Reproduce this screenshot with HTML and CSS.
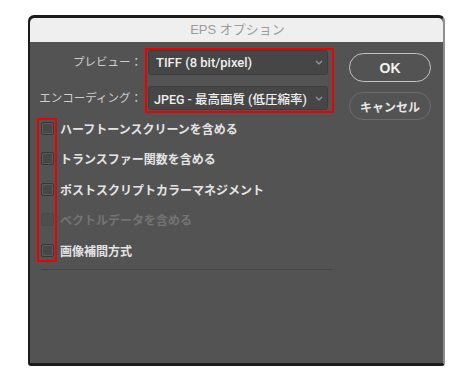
FILE: index.html
```html
<!DOCTYPE html>
<html lang="ja">
<head>
<meta charset="UTF-8">
<meta name="viewport" content="width=device-width, initial-scale=1.0">
<title>EPS オプション</title>
<link rel="stylesheet" href="styles.css">
</head>
<body>
<div class="page">
  <div class="window">
    <div class="titlebar">EPS オプション</div>

    <div class="content">
      <!-- プレビュー / エンコーディング -->
      <div class="form">
        <div class="labels">
          <span>プレビュー：</span>
          <span>エンコーディング：</span>
        </div>
        <div class="mark-box">
          <div class="select select-first">
            <span>TIFF (8 bit/pixel)</span>
            <svg class="chevron" width="8" height="5" viewBox="0 0 8 5"><path d="M1 1l3 3 3-3" fill="none" stroke="#9a9a9a" stroke-width="1.2"/></svg>
          </div>
          <div class="select select-second">
            <span>JPEG - 最高画質 (低圧縮率)</span>
            <svg class="chevron" width="8" height="5" viewBox="0 0 8 5"><path d="M1 1l3 3 3-3" fill="none" stroke="#9a9a9a" stroke-width="1.2"/></svg>
          </div>
        </div>
      </div>

      <div class="buttons">
        <button class="btn btn-ok">OK</button>
        <button class="btn btn-cancel">キャンセル</button>
      </div>

      <!-- チェックボックス -->
      <div class="options">
        <div class="mark-column"></div>
        <label class="option"><span class="check"></span>ハーフトーンスクリーンを含める</label>
        <label class="option"><span class="check"></span>トランスファー関数を含める</label>
        <label class="option"><span class="check"></span>ポストスクリプトカラーマネジメント</label>
        <label class="option disabled"><span class="check"></span>ベクトルデータを含める</label>
        <label class="option"><span class="check"></span>画像補間方式</label>
        <div class="separator"></div>
      </div>
    </div>
  </div>
</div>
</body>
</html>
```

FILE: styles.css
```css
/* Page */
body {
  margin: 0;
  background-color: #fff;
  font-family: "Liberation Sans", "Noto Sans CJK JP", sans-serif;
}

.page {
  padding: 15px 0 0 28px;
}

/* Dialog window */
.window {
  width: 417px;
  height: 351px;
  box-sizing: border-box;
  border: 2px solid #1d1a1a;
  border-top-width: 3px;
  border-bottom-width: 3px;
  border-right-color: #8e8e8e;
  border-radius: 6px 6px 3px 3px;
  background-color: #535353;
  display: flex;
  flex-direction: column;
}

.titlebar {
  height: 24px;
  line-height: 24px;
  background-color: #efefef;
  border-radius: 5px 5px 0 0;
  text-align: center;
  color: #9c9c9c;
  font-size: 13px;
  padding-left: 2px;
}

.content {
  display: grid;
  grid-template-columns: 307px 82px;
  column-gap: 12px;
  padding-top: 6px;
  align-items: start;
}

/* Form with selects */
.form {
  display: flex;
}

.labels {
  width: 115px;
  box-sizing: border-box;
  padding: 2px 3px 0 0;
  display: flex;
  flex-direction: column;
  gap: 11px;
  text-align: right;
  color: #cfcfcf;
  font-size: 11.5px;
}

.labels span {
  height: 25px;
  line-height: 25px;
}

.mark-box {
  width: 189px;
  box-sizing: border-box;
  border: 2px solid #ee0000;
  padding: 0 4px 1px 1px;
  display: flex;
  flex-direction: column;
  gap: 11px;
}

.select {
  height: 25px;
  box-sizing: border-box;
  background-color: #464646;
  border: 1px solid #3d3d3d;
  border-radius: 3px;
  display: flex;
  align-items: center;
  justify-content: space-between;
  padding: 0 4px 0 7px;
  color: #efefef;
  font-family: "Roboto", "Noto Sans CJK JP", sans-serif;
  font-size: 13px;
  font-weight: 500;
  white-space: nowrap;
}

.select-second {
  height: 24px;
  padding-left: 5px;
  font-size: 12.5px;
}

.chevron {
  flex: none;
}

/* Buttons */
.buttons {
  grid-column: 2;
  grid-row: 1 / span 2;
  margin-top: 5px;
  display: flex;
  flex-direction: column;
  gap: 10px;
}

.btn {
  height: 29px;
  background-color: transparent;
  border: 1px solid #c2c2c2;
  border-radius: 15px;
  color: #f2f2f2;
  font-family: "Liberation Sans", "Noto Sans CJK JP", sans-serif;
  font-size: 14px;
  font-weight: 700;
  padding: 0;
}

.btn-cancel {
  height: 28px;
  border-color: #6c6c6c;
  font-size: 12px;
  color: #e6e6e6;
}

/* Checkbox list */
.options {
  grid-column: 1;
  position: relative;
  padding-left: 11px;
}

.option {
  height: 30.5px;
  display: flex;
  align-items: center;
  gap: 6px;
  color: #e4e4e4;
  font-size: 12px;
  font-weight: 700;
}

.check {
  width: 13px;
  height: 13px;
  box-sizing: border-box;
  border: 1px solid #383838;
  border-radius: 2px;
  background-color: #474747;
  box-shadow: inset 0 0 0 1px #5a5a5a;
}

.option.disabled {
  color: #747474;
}

.option.disabled .check {
  border-color: #4a4a4a;
  background-color: #4e4e4e;
  box-shadow: none;
}

/* red annotation around the checkboxes */
.mark-column {
  position: absolute;
  left: 7px;
  top: 5px;
  width: 20px;
  height: 144px;
  box-sizing: border-box;
  border: 2px solid #ee0000;
}

.separator {
  width: 291px;
  height: 1px;
  margin-top: 3px;
  background-color: #434343;
}
```
